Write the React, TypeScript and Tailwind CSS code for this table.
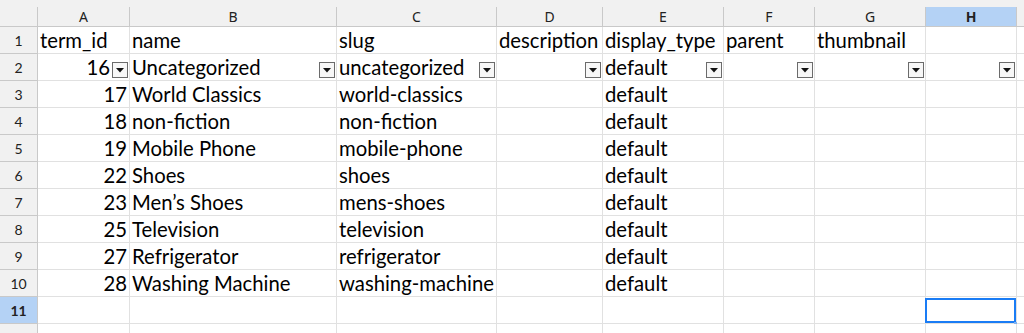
import React from "react";

type Row = {
  id?: string;
  name?: string;
  slug?: string;
  description?: string;
  type?: string;
  parent?: string;
  thumb?: string;
};

// The ninth column only peeks in at the right edge, so its letter stays blank.
const cols = ["A", "B", "C", "D", "E", "F", "G", "H", ""];

const data: Row[] = [
  { id: "16", name: "Uncategorized", slug: "uncategorized", type: "default" },
  { id: "17", name: "World Classics", slug: "world-classics", type: "default" },
  { id: "18", name: "non-fiction", slug: "non-fiction", type: "default" },
  { id: "19", name: "Mobile Phone", slug: "mobile-phone", type: "default" },
  { id: "22", name: "Shoes", slug: "shoes", type: "default" },
  { id: "23", name: "Men’s Shoes", slug: "mens-shoes", type: "default" },
  { id: "25", name: "Television", slug: "television", type: "default" },
  { id: "27", name: "Refrigerator", slug: "refrigerator", type: "default" },
  { id: "28", name: "Washing Machine", slug: "washing-machine", type: "default" },
];

const gridCols =
  "grid w-[1108px] grid-cols-[38px_92px_207px_160px_106px_121px_91px_111px_91px_91px]";

function FilterButton() {
  return (
    <span className="absolute right-[1px] bottom-[2px] flex h-[16px] w-[16px] items-center justify-center border border-[#6b6b6b] bg-[#f7f7f7]">
      <svg width="8" height="5" viewBox="0 0 8 5">
        <path d="M0 0 H8 L4 4.5 Z" fill="#111" />
      </svg>
    </span>
  );
}

function Cell({
  text,
  align = "left",
  filter = false,
  selected = false,
}: {
  text?: string;
  align?: "left" | "right";
  filter?: boolean;
  selected?: boolean;
}) {
  return (
    <div className="relative h-[27px] border-r border-b border-[#e1e1e1] bg-white">
      {text !== undefined && (
        <div
          className={
            "absolute bottom-[1px] whitespace-nowrap text-[20.3px] leading-[24px] text-black " +
            (align === "right"
              ? filter
                ? "right-[19px]"
                : "right-[2px]"
              : "left-[2px]")
          }
        >
          {text}
        </div>
      )}
      {filter && <FilterButton />}
      {selected && (
        <>
          <div className="absolute top-[1px] -left-[1px] right-[0px] bottom-[0px] border-2 border-[#1a7cf5]" />
          <div className="absolute -right-[2px] -bottom-[3px] h-[4px] w-[4px] bg-[#7fb3f2]" />
        </>
      )}
    </div>
  );
}

function RowHeader({ n, active = false }: { n?: number; active?: boolean }) {
  return (
    <div
      className={
        "flex h-[27px] items-center justify-center border-r border-b border-[#c9c9c9] text-[14px] text-[#222] " +
        (active ? "bg-[#b4d2f5] font-bold" : "bg-[#f1f1f1]")
      }
    >
      {n}
    </div>
  );
}

export default function App() {
  const header: Row = {
    id: "term_id",
    name: "name",
    slug: "slug",
    description: "description",
    type: "display_type",
    parent: "parent",
    thumb: "thumbnail",
  };

  return (
    <div
      className="h-[333px] w-[1024px] overflow-hidden bg-white"
      style={{ fontFamily: "Lato, 'Open Sans', sans-serif" }}
    >
      <div className="h-[7px] w-[1108px] bg-[#f1f1f1]" />
      {/* column letters */}
      <div className={gridCols}>
        <div className="h-[20px] border-r border-b border-[#c9c9c9] bg-[#f1f1f1]" />
        {cols.map((c, i) => (
          <div
            key={i}
            className={
              "flex h-[20px] items-center justify-center border-r border-b border-[#c9c9c9] text-[14px] leading-none text-[#222] " +
              (c === "H" ? "bg-[#b4d2f5] font-bold" : "bg-[#f1f1f1]")
            }
            style={{ fontFamily: "'Noto Sans', 'DejaVu Sans', sans-serif" }}
          >
            {c}
          </div>
        ))}
      </div>

      {/* header row */}
      <div className={gridCols}>
        <RowHeader n={1} />
        <Cell text={header.id} />
        <Cell text={header.name} />
        <Cell text={header.slug} />
        <Cell text={header.description} />
        <Cell text={header.type} />
        <Cell text={header.parent} />
        <Cell text={header.thumb} />
        <Cell />
        <Cell />
      </div>

      {data.map((r, i) => {
        const first = i === 0;
        return (
          <div key={r.id} className={gridCols}>
            <RowHeader n={i + 2} />
            <Cell text={r.id} align="right" filter={first} />
            <Cell text={r.name} filter={first} />
            <Cell text={r.slug} filter={first} />
            <Cell text={r.description} filter={first} />
            <Cell text={r.type} filter={first} />
            <Cell filter={first} />
            <Cell filter={first} />
            <Cell filter={first} />
            <Cell />
          </div>
        );
      })}

      <div className={gridCols}>
        <RowHeader n={11} active />
        <Cell />
        <Cell />
        <Cell />
        <Cell />
        <Cell />
        <Cell />
        <Cell />
        <Cell selected />
        <Cell />
      </div>
      <div className={gridCols}>
        <RowHeader />
        {cols.map((_, i) => (
          <Cell key={i} />
        ))}
      </div>
    </div>
  );
}
